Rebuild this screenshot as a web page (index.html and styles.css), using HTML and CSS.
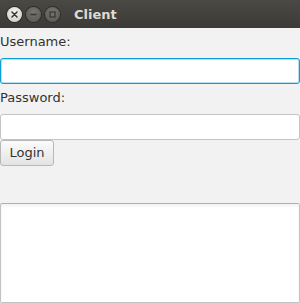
FILE: index.html
```html
<!DOCTYPE html>
<html>
<head>
<meta charset="utf-8">
<link rel="stylesheet" href="styles.css">
</head>
<body>
<div class="window">
  <div class="titlebar">
    <div class="controls">
      <span class="wbtn close">
        <svg width="15" height="15" viewBox="0 0 15 15"><path d="M5 5L10 10M10 5L5 10" stroke="#3a3935" stroke-width="1.6" stroke-linecap="round"/></svg>
      </span>
      <span class="wbtn dim">
        <svg width="15" height="15" viewBox="0 0 15 15"><path d="M4.5 7.5H10.5" stroke="#3a3935" stroke-width="1.6"/></svg>
      </span>
      <span class="wbtn dim">
        <svg width="15" height="15" viewBox="0 0 15 15"><rect x="5" y="5" width="5" height="5" fill="none" stroke="#3a3935" stroke-width="1.3"/></svg>
      </span>
    </div>
    <span class="title">Client</span>
  </div>
  <div class="form">
    <label class="label first">Username:</label>
    <div class="field focused"></div>
    <label class="label">Password:</label>
    <div class="field"></div>
    <div class="row"><button class="btn">Login</button></div>
    <div class="area"></div>
  </div>
</div>
</body>
</html>
```
FILE: styles.css
```css
html, body {
  margin: 0;
  padding: 0;
  background: #f2f2f2;
  font-family: "DejaVu Sans", sans-serif;
}
.window {
  width: 300px;
  height: 303px;
  display: flex;
  flex-direction: column;
  overflow: hidden;
}
.titlebar {
  height: 28px;
  flex: none;
  background: linear-gradient(#4a4944, #3c3b37);
  display: flex;
  align-items: center;
}
.controls {
  display: flex;
  gap: 4px;
  padding-left: 7px;
  align-items: center;
}
.wbtn {
  width: 15px;
  height: 15px;
  border-radius: 50%;
  display: flex;
  box-sizing: border-box;
}
.wbtn svg { display: block; }
.close {
  background: radial-gradient(circle at 50% 35%, #f4f4f2, #c9c8c4);
  box-shadow: 0 0 0 1px #2e2d2a;
}
.dim {
  background: radial-gradient(circle at 50% 35%, #77766f, #55544f);
  box-shadow: 0 0 0 1px #2e2d2a;
}
.controls .dim:last-child { margin-left: 0px; }
.title {
  margin-left: 14px;
  color: #dfdbd2;
  font-weight: bold;
  font-size: 13px;
  line-height: 16px;
  padding-top: 1px;
}
.form {
  display: flex;
  flex-direction: column;
  align-items: stretch;
}
.label {
  display: block;
  font-size: 13px;
  line-height: 16px;
  color: #333333;
  margin-top: 6px;
  margin-bottom: 8px;
}
.field {
  height: 26px;
  box-sizing: border-box;
  background: #ffffff;
  border: 1px solid #c4c4c4;
  border-radius: 3px;
  width: 300px;
}
.field.focused {
  border: 1px solid #0b9ed8;
  box-shadow: inset 0 0 0 1px #b6e0f2;
}
.row {
  display: flex;
}
.btn {
  height: 26px;
  width: 54px;
  box-sizing: border-box;
  border: 1px solid #b8b8b8;
  border-radius: 3px;
  background: linear-gradient(#fbfbfb, #e3e3e3);
  font-family: "DejaVu Sans", sans-serif;
  font-size: 13px;
  color: #333333;
  padding: 0 0 1px 0;
  margin: 0;
}
.area {
  margin-top: 37px;
  height: 100px;
  width: 300px;
  box-sizing: border-box;
  background: #ffffff;
  border: 1px solid #c2c2c2;
  border-top-color: #b0b0b0;
  box-shadow: inset 0 2px 3px rgba(0,0,0,0.06);
  border-radius: 2px;
}
```
